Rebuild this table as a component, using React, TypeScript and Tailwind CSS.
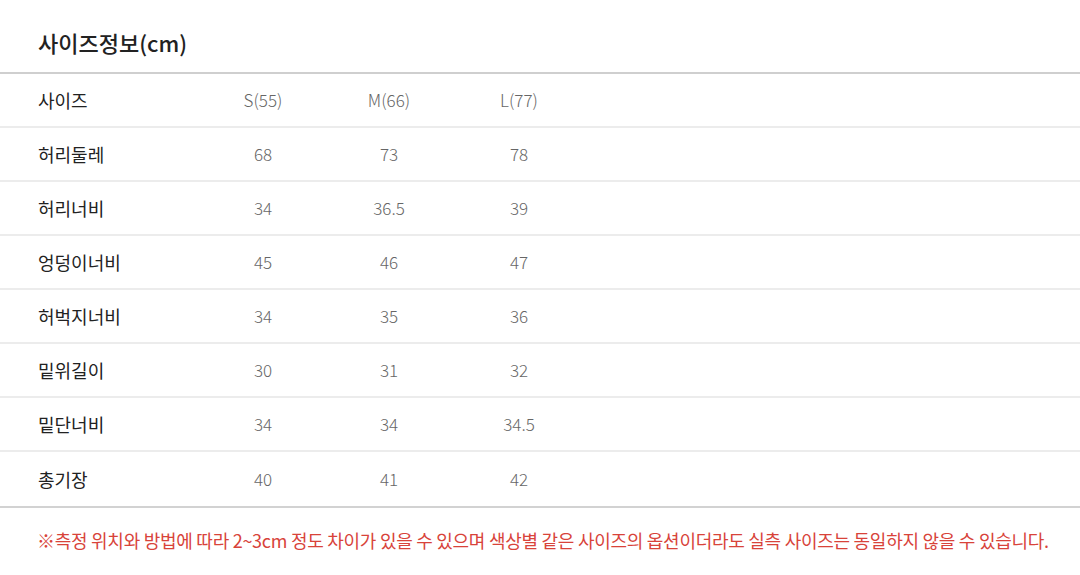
const rows: [string, string, string, string][] = [
  ["허리둘레", "68", "73", "78"],
  ["허리너비", "34", "36.5", "39"],
  ["엉덩이너비", "45", "46", "47"],
  ["허벅지너비", "34", "35", "36"],
  ["밑위길이", "30", "31", "32"],
  ["밑단너비", "34", "34", "34.5"],
  ["총기장", "40", "41", "42"],
]

function Row({ cells, last }: { cells: [string, string, string, string]; last?: boolean }) {
  return (
    <div
      className={`grid grid-cols-[200px_126px_126px_134px_1fr] items-center border-b-2 ${
        last ? "h-[56px] border-[#d2d2d2]" : "h-[54px] border-[#ececec]"
      }`}
    >
      <div className="pl-[38px] text-[18px] text-[#222]">{cells[0]}</div>
      <div className="text-center text-[17px] font-light text-[#666]">{cells[1]}</div>
      <div className="text-center text-[17px] font-light text-[#666]">{cells[2]}</div>
      <div className="text-center text-[17px] font-light text-[#666]">{cells[3]}</div>
      <div />
    </div>
  )
}

export default function App() {
  return (
    <div
      className="h-[575px] w-[1080px] overflow-hidden bg-white"
      style={{ fontFamily: '"Noto Sans CJK KR", "Noto Sans", sans-serif' }}
    >
      <div className="flex h-[72px] items-center pl-[38px]">
        <h1 className="pt-[12px] text-[22px] font-medium text-[#222]">사이즈정보(cm)</h1>
      </div>
      <div className="border-t-2 border-[#cfcfcf]">
        <Row cells={["사이즈", "S(55)", "M(66)", "L(77)"]} />
        {rows.map((r, i) => (
          <Row key={r[0]} cells={r} last={i === rows.length - 1} />
        ))}
      </div>
      <p className="mt-[19px] pl-[37px] text-[18px] tracking-[-0.27px] text-[#d8433a]">
        ※측정 위치와 방법에 따라 2~3cm 정도 차이가 있을 수 있으며 색상별 같은 사이즈의 옵션이더라도 실측 사이즈는 동일하지 않을 수 있습니다.
      </p>
    </div>
  )
}
